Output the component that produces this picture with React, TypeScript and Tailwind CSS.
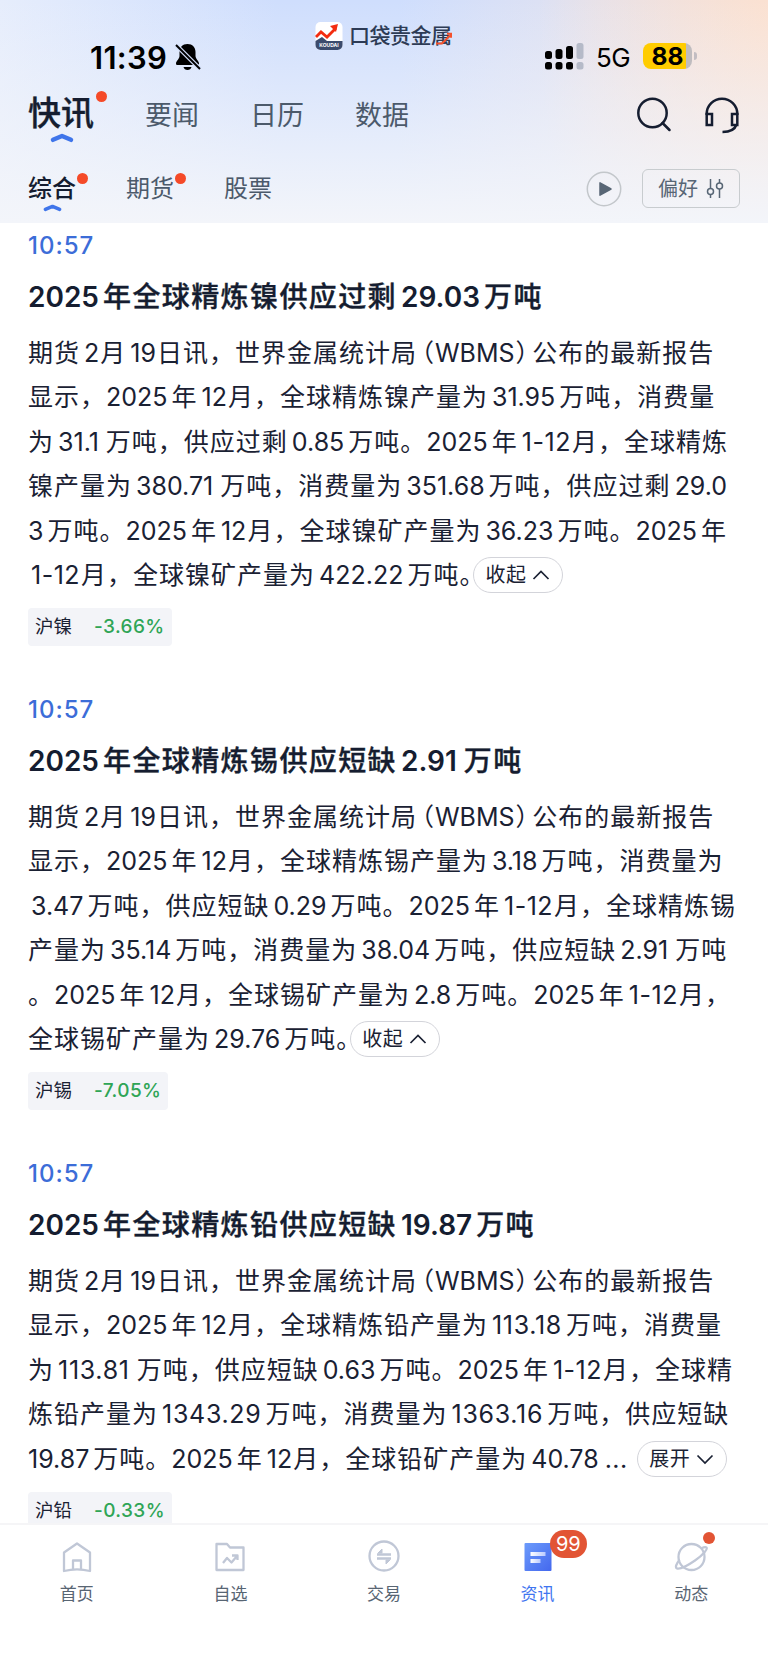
import React from 'react';

const items = [
  {
    title: '2025年全球精炼镍供应过剩29.03万吨',
    lines: [
      '期货2月19日讯，世界金属统计局（WBMS）公布的最新报告',
      '显示，2025年12月，全球精炼镍产量为31.95万吨，消费量',
      '为31.1万吨，供应过剩0.85万吨。2025年1-12月，全球精炼',
      '镍产量为380.71万吨，消费量为351.68万吨，供应过剩29.0',
      '3万吨。2025年12月，全球镍矿产量为36.23万吨。2025年',
      ' 1-12月，全球镍矿产量为422.22万吨。',
    ],
    open: true,
    tag: '沪镍',
    change: '-3.66%',
  },
  {
    title: '2025年全球精炼锡供应短缺2.91万吨',
    lines: [
      '期货2月19日讯，世界金属统计局（WBMS）公布的最新报告',
      '显示，2025年12月，全球精炼锡产量为3.18万吨，消费量为',
      ' 3.47万吨，供应短缺0.29万吨。2025年1-12月，全球精炼锡',
      '产量为35.14万吨，消费量为38.04万吨，供应短缺2.91万吨',
      '。2025年12月，全球锡矿产量为2.8万吨。2025年1-12月，',
      '全球锡矿产量为29.76万吨。',
    ],
    open: true,
    tag: '沪锡',
    change: '-7.05%',
  },
  {
    title: '2025年全球精炼铅供应短缺19.87万吨',
    lines: [
      '期货2月19日讯，世界金属统计局（WBMS）公布的最新报告',
      '显示，2025年12月，全球精炼铅产量为113.18万吨，消费量',
      '为113.81万吨，供应短缺0.63万吨。2025年1-12月，全球精',
      '炼铅产量为1343.29万吨，消费量为1363.16万吨，供应短缺',
      '19.87万吨。2025年12月，全球铅矿产量为40.78...',
    ],
    open: false,
    tag: '沪铅',
    change: '-0.33%',
  },
];

// Adds a thin gap between Chinese characters and numbers
function Spaced({ text }: { text: string }) {
  const parts = text.trim().split(/([0-9.-]*[0-9]|WBMS|\.\.\.|（|）|。$)/);
  return (
    <>
      {parts.map((part, i) => {
        const prev = parts[i - 1] || '';
        const next = parts[i + 1] || '';
        if (part === '（') return <span key={i} className="ml-[4.5px] [font-feature-settings:'halt']">{part}</span>;
        if (part === '）') return <span key={i} className="mr-[3px] ml-px [font-feature-settings:'halt']">{part}</span>;
        if (part === '。' && i > 0) return <span key={i} className="[font-feature-settings:'halt']">{part}</span>;
        if (part === 'WBMS') return <span key={i} className="tracking-normal">{part}</span>;
        if (part === '...') return <span key={i} className="ml-0.5 tracking-[0.5px]">{part}</span>;
        if (/^[0-9.-]+$/.test(part)) {
          const left = prev === '' || /[，。]$/.test(prev) ? '' : 'ml-[4px]';
          const right = /^[月日]/.test(next) ? 'mr-px' : part.endsWith('1') ? 'mr-[7px]' : 'mr-[4px]';
          const tracking = /^1\d\d/.test(part) ? 'tracking-[0.7px]' : part.includes('-') ? 'tracking-[0.5px]' : 'tracking-normal';
          return <span key={i} className={`${left} ${right} ${tracking}`}>{part}</span>;
        }
        return part;
      })}
    </>
  );
}

function Chevron({ up }: { up: boolean }) {
  return (
    <svg width="18" height="12" viewBox="0 0 18 12" fill="none" stroke="#1a2133" strokeWidth="1.7">
      <path d={up ? 'M1.5 10 9 2.5 16.5 10' : 'M1.5 2.5 9 10l7.5-7.5'} />
    </svg>
  );
}

function NewsItem({ item }: { item: (typeof items)[0] }) {
  return (
    <article className="h-[464px] pl-7">
      <div className="h-[30px] text-[24px] leading-[32px] font-medium tracking-[1px] text-[#3c6dd8]">10:57</div>
      <h2 className="mt-[17px] h-10 text-[28px] leading-10 font-medium tracking-[1.4px] whitespace-nowrap text-[#151d30] [-webkit-text-stroke:0.35px_#151d30] [&>span]:font-semibold [&>span]:[-webkit-text-stroke:0]">
        <Spaced text={item.title} />
      </h2>
      <div className="mt-[14px] text-[25px] leading-[44.4px] tracking-[1px] whitespace-nowrap text-[#1a2133]">
        {item.lines.map((line, i) => (
          <div key={i} className={`flex h-[44.4px] items-center ${line.startsWith(' ') ? 'pl-[3px]' : ''}`}>
            <span><Spaced text={line} /></span>
            {i === item.lines.length - 1 && (
              <button className={`flex h-9 w-[90px] items-center justify-center gap-1.5 rounded-full border-[1.5px] border-[#d3d4da] text-[20px] leading-none tracking-[0.5px] ${item.open ? '' : 'ml-[9px]'}`}>
                {item.open ? '收起' : '展开'}
                <Chevron up={item.open} />
              </button>
            )}
          </div>
        ))}
      </div>
      <div className="mt-[11px] inline-flex h-[38px] items-center gap-[22px] rounded bg-[#f3f4f8] px-[7px] text-[18.5px] text-[#1a2133]">
        {item.tag}
        <span className="text-[19px] font-medium tracking-[0.4px] text-[#2fa556]">{item.change}</span>
      </div>
    </article>
  );
}

function StatusBar() {
  return (
    <div className="relative h-[84px]">
      <div className="absolute top-[43px] left-[90px] text-[31px] leading-[30px] font-semibold tracking-[0.3px] text-black">11:39</div>
      <svg className="absolute top-[43px] left-[174px]" width="28" height="28" viewBox="0 0 28 28">
        <path d="M13.500 1C8.500 1 5.500 4.500 5.500 9v4c0 3-3.500 5-3.500 7.500 0 1 .7 1.500 1.500 1.500h20c1 0 1.500-.6 1.500-1.500 0-2.500-3.500-4.500-3.500-7.500V9c0-4.500-3-8-8-8zM9.500 24h8c-.5 2-2 3-4 3s-3.500-1-4-3z" />
        <path d="m2 2 24 24" stroke="#d5e1fb" strokeWidth="4.500" />
        <path d="m2 2 24 24" stroke="#000" strokeWidth="2" />
      </svg>
      <div className="absolute top-[20px] left-[315px] flex items-center">
        <svg width="28" height="30" viewBox="0 0 28 30">
          <rect x=".5" y="1" width="27" height="28" rx="5" fill="#fff" />
          <path d="M.5 20 7 16l5 4h15.500v4a5 5 0 0 1-5 5h-17a5 5 0 0 1-5-5z" fill="#3b4b6d" />
          <path d="m1 16 5-5 6 5 9-9" fill="none" stroke="#f32c10" strokeWidth="2.800" />
          <path d="m15 5 8-2-2 8z" fill="#f32c10" />
          <text x="14" y="26" textAnchor="middle" fontSize="5" fontWeight="700" fill="#fff" fontFamily="Inter">KOUDAI</text>
        </svg>
        <span className="ml-[6px] text-[21px] leading-[32px] font-medium tracking-[-0.5px] text-[#2d3b55]">口袋贵金属</span>
        <svg className="absolute top-[12px] left-[120px]" width="18" height="13" viewBox="0 0 18 13" fill="none" stroke="#f4512c" strokeWidth="2">
          <path d="M1 11.500h6l8-8M12 1.800h4v4" />
        </svg>
      </div>
      <svg className="absolute top-[43px] left-[544px]" width="40" height="28" viewBox="0 0 40 28">
        <rect x="1" y="8" width="7" height="8" rx="2.500" />
        <rect x="11.500" y="6" width="7" height="10" rx="2.500" />
        <rect x="22" y="3" width="7" height="13" rx="2.500" />
        <rect x="32.500" y="0" width="7" height="16" rx="2.500" fill="#b5bac8" />
        <rect x="1" y="19" width="7" height="7.500" rx="2.500" />
        <rect x="11.500" y="19" width="7" height="7.500" rx="2.500" />
        <rect x="22" y="19" width="7" height="7.500" rx="2.500" />
        <rect x="32.500" y="19" width="7" height="7.500" rx="2.500" fill="#b5bac8" />
      </svg>
      <div className="absolute top-[43px] left-[596px] text-[26px] leading-[30px] tracking-[-0.5px] text-black">5G</div>
      <div className="absolute top-[43px] left-[643px] flex items-center">
        <div className="flex h-[26px] w-[49px] items-center justify-center rounded-lg bg-linear-to-r from-[#ffcc00] from-88% to-[#bfbcbf] to-88% text-[24.5px] leading-none font-bold text-black">88</div>
        <div className="ml-0.5 h-2 w-[3px] rounded-r-full bg-[#c2bdc2]" />
      </div>
    </div>
  );
}

function Caret({ className }: { className: string }) {
  return (
    <svg className={className} viewBox="0 0 24 10" fill="none" stroke="#3f75ea" strokeWidth="4.500" strokeLinecap="round" strokeLinejoin="round">
      <path d="M3 6.800 12 3l9 3.800" />
    </svg>
  );
}

function Header() {
  return (
    <header className="h-[223px] bg-[linear-gradient(to_bottom,#f3f5fa00_0%,#f3f5fa_100%),radial-gradient(ellipse_230px_420px_at_100%_8%,#fbe1d1_0%,#fbe1d100_100%),linear-gradient(to_right,#e6edfc_0%,#cfdefd_36%,#cfdefd_52%,#e2e2f0_78%,#eae2e8_100%)]">
      <StatusBar />
      <div className="flex h-[66px] text-[#4c5a6b]">
        <div className="relative ml-[28px] text-[33px] leading-[58px] font-medium text-[#151d30] [-webkit-text-stroke:0.35px_#151d30]">
          快讯
          <Caret className="absolute top-[49px] left-[22px] h-[10px] w-6" />
          <i className="absolute top-[7px] left-[68px] size-[11px] rounded-full bg-[#f54a28]" />
        </div>
        <div className="ml-[51px] flex gap-[51px] text-[27px] leading-[64px]">
          <span>要闻</span>
          <span>日历</span>
          <span>数据</span>
        </div>
        <svg className="mt-[13px] ml-auto" width="36" height="36" viewBox="0 0 36 36" fill="none" stroke="#151d30" strokeWidth="2.500" strokeLinecap="round">
          <circle cx="16.500" cy="16" r="14.200" />
          <path d="m26.500 26 7 7" />
        </svg>
        <svg className="mt-[12px] mr-[28px] ml-[32px]" width="36" height="38" viewBox="0 0 36 38" fill="none" stroke="#151d30" strokeWidth="2.500">
          <path d="M2.700 19v-1a15.300 15.300 0 0 1 30.600 0v1M32.500 28.500c-1.500 4.500-6 7.500-14 7.500" />
          <rect x="2.700" y="18" width="5.300" height="11" />
          <rect x="28" y="18" width="5.300" height="11" />
        </svg>
      </div>
      <div className="flex h-[73px] text-[24px] leading-[77px] text-[#4c5a6b]">
        <div className="relative ml-[28px] font-medium text-[#151d30]">
          综合
          <Caret className="absolute top-[54px] left-[15px] h-[8px] w-[19px]" />
          <i className="absolute top-[23px] left-[49px] size-[11px] rounded-full bg-[#f54a28]" />
        </div>
        <div className="relative ml-[50px]">
          期货
          <i className="absolute top-[23px] left-[49px] size-[11px] rounded-full bg-[#f54a28]" />
        </div>
        <div className="ml-[50px]">股票</div>
        <svg className="mt-[21px] ml-auto" width="36" height="36" viewBox="0 0 36 36">
          <circle cx="18" cy="18" r="16.700" fill="none" stroke="#c3c7cb" strokeWidth="1.500" />
          <path d="M14 11.800v12.400L25 18z" fill="#586675" stroke="#586675" strokeWidth="1.500" strokeLinejoin="round" />
        </svg>
        <div className="mt-[19px] mr-[28px] ml-[20px] flex h-[39px] w-[98px] items-center justify-center gap-2 rounded-md border-[1.5px] border-[#c8cccf] text-[20px] leading-none text-[#586675]">
          偏好
          <svg width="18" height="20" viewBox="0 0 18 20" fill="none" stroke="#586675" strokeWidth="1.500">
            <path d="M4.500 0v9.500M4.500 15.500V19M13.500 0v4M13.500 10v9" />
            <circle cx="4.500" cy="12.500" r="3" />
            <circle cx="13.500" cy="7" r="3" />
          </svg>
        </div>
      </div>
    </header>
  );
}

const tabs = [
  {
    label: '首页',
    icon: (
      <>
        <path d="M5 12.500 18 3.500l13 9V31c-8-2-18-2-26 0z" />
        <path d="M14 29v-8.500h8V29" />
      </>
    ),
  },
  {
    label: '自选',
    icon: (
      <>
        <path d="M4.500 4H15l3 3.500h13.500V30h-27z" />
        <path d="m11 23 4-5 4.500 4.500 5.500-6.500M20 15.500h5.500V20" />
      </>
    ),
  },
  {
    label: '交易',
    icon: (
      <>
        <circle cx="18" cy="16" r="14.500" />
        <path d="M11 14.500h14M11 18.500h14" />
        <path d="m12 13 4-4v4zM24 20l-4 4v-4z" fill="#c0c7d6" strokeWidth="1" />
      </>
    ),
  },
  {
    label: '资讯',
    active: true,
    icon: (
      <>
        <defs>
          <linearGradient id="news" x1="0" y1="0" x2="1" y2="1">
            <stop stopColor="#6c9bfb" />
            <stop offset="1" stopColor="#4468ee" />
          </linearGradient>
          <linearGradient id="bar">
            <stop stopColor="#fff" />
            <stop offset="1" stopColor="#b9caff" />
          </linearGradient>
        </defs>
        <rect x="4.500" y="3" width="27" height="28" rx="1" fill="url(#news)" stroke="none" />
        <rect x="10.500" y="12" width="15" height="4" fill="url(#bar)" stroke="none" />
        <rect x="10.500" y="19" width="10" height="4" fill="url(#bar)" stroke="none" />
      </>
    ),
  },
  {
    label: '动态',
    icon: (
      <>
        <circle cx="18.500" cy="17" r="13" />
        <path d="M6.500 20C3 24 2 27.500 4 28.500c3 .9 10-2.500 18-8S35 9 33.500 7.500c-.8-.8-2.500-.5-5 .8" />
      </>
    ),
  },
];

function TabBar() {
  return (
    <nav className="absolute inset-x-0 bottom-0 flex h-[146px] border-t-2 border-[#f5f5f7] bg-white">
      {tabs.map((tab) => (
        <div key={tab.label} className={`relative flex flex-1 flex-col items-center pt-[15px] text-[17px] leading-6 ${tab.active ? 'text-[#3f75f0]' : 'text-[#586573]'}`}>
          <svg width="36" height="36" viewBox="0 0 36 36" fill="none" stroke="#c0c7d6" strokeWidth="2.300" strokeLinejoin="round">{tab.icon}</svg>
          <span className="mt-1.5">{tab.label}</span>
          {tab.active && (
            <b className="absolute top-[5px] left-[89px] flex h-7 w-[37px] items-center justify-center rounded-full bg-[#e25434] text-[20px] font-normal text-white">99</b>
          )}
          {tab.label === '动态' && <i className="absolute top-[7px] left-[89px] size-3 rounded-full bg-[#e25434]" />}
        </div>
      ))}
    </nav>
  );
}

export default function App() {
  return (
    <div className='relative h-[1669px] w-[768px] overflow-hidden bg-white font-[Inter,"Noto_Sans_CJK_SC",sans-serif]'>
      <Header />
      <main className="pt-[7px]">
        {items.map((item) => (
          <NewsItem key={item.title} item={item} />
        ))}
      </main>
      <TabBar />
    </div>
  );
}
